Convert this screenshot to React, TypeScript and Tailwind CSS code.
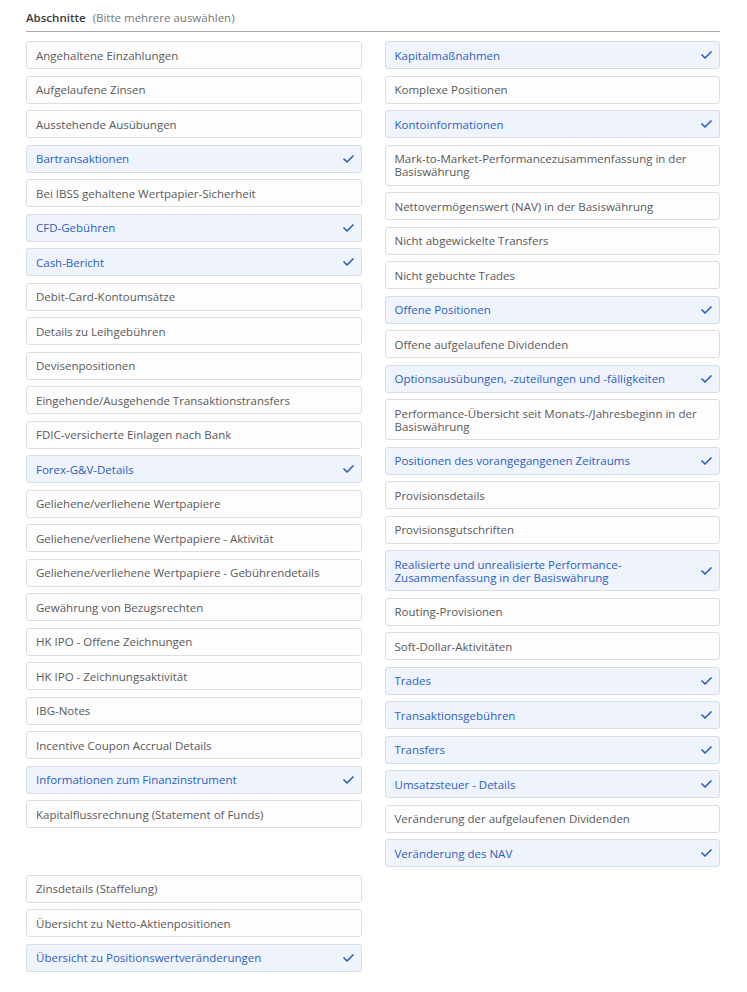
import React from "react";

type Item = { label: string; on?: boolean };

const left: Item[] = [
  { label: "Angehaltene Einzahlungen" },
  { label: "Aufgelaufene Zinsen" },
  { label: "Ausstehende Ausübungen" },
  { label: "Bartransaktionen", on: true },
  { label: "Bei IBSS gehaltene Wertpapier-Sicherheit" },
  { label: "CFD-Gebühren", on: true },
  { label: "Cash-Bericht", on: true },
  { label: "Debit-Card-Kontoumsätze" },
  { label: "Details zu Leihgebühren" },
  { label: "Devisenpositionen" },
  { label: "Eingehende/Ausgehende Transaktionstransfers" },
  { label: "FDIC-versicherte Einlagen nach Bank" },
  { label: "Forex-G&V-Details", on: true },
  { label: "Geliehene/verliehene Wertpapiere" },
  { label: "Geliehene/verliehene Wertpapiere - Aktivität" },
  { label: "Geliehene/verliehene Wertpapiere - Gebührendetails" },
  { label: "Gewährung von Bezugsrechten" },
  { label: "HK IPO - Offene Zeichnungen" },
  { label: "HK IPO - Zeichnungsaktivität" },
  { label: "IBG-Notes" },
  { label: "Incentive Coupon Accrual Details" },
  { label: "Informationen zum Finanzinstrument", on: true },
  { label: "Kapitalflussrechnung (Statement of Funds)" },
];

const right: Item[] = [
  { label: "Kapitalmaßnahmen", on: true },
  { label: "Komplexe Positionen" },
  { label: "Kontoinformationen", on: true },
  { label: "Mark-to-Market-Performancezusammenfassung in der Basiswährung" },
  { label: "Nettovermögenswert (NAV) in der Basiswährung" },
  { label: "Nicht abgewickelte Transfers" },
  { label: "Nicht gebuchte Trades" },
  { label: "Offene Positionen", on: true },
  { label: "Offene aufgelaufene Dividenden" },
  { label: "Optionsausübungen, -zuteilungen und -fälligkeiten", on: true },
  { label: "Performance-Übersicht seit Monats-/Jahresbeginn in der Basiswährung" },
  { label: "Positionen des vorangegangenen Zeitraums", on: true },
  { label: "Provisionsdetails" },
  { label: "Provisionsgutschriften" },
  { label: "Realisierte und unrealisierte Performance-Zusammenfassung in der Basiswährung", on: true },
  { label: "Routing-Provisionen" },
  { label: "Soft-Dollar-Aktivitäten" },
  { label: "Trades", on: true },
  { label: "Transaktionsgebühren", on: true },
  { label: "Transfers", on: true },
  { label: "Umsatzsteuer - Details", on: true },
  { label: "Veränderung der aufgelaufenen Dividenden" },
  { label: "Veränderung des NAV", on: true },
];

const tail: Item[] = [
  { label: "Zinsdetails (Staffelung)" },
  { label: "Übersicht zu Netto-Aktienpositionen" },
  { label: "Übersicht zu Positionswertveränderungen", on: true },
];

function Tick() {
  return (
    <svg width="11" height="8" viewBox="0 0 11 8" className="shrink-0">
      <path d="M1 4l3 3 6-6" fill="none" stroke="#2f63c4" strokeWidth="1.7" strokeLinecap="round" strokeLinejoin="round" />
    </svg>
  );
}

function Option({ label, on }: Item) {
  return (
    <div
      className={
        on
          ? "flex items-center gap-3 rounded-[3px] border border-[#d6dce8] bg-[#eff3fc] pl-[9px] pr-[7px] py-[6.5px] text-[#2c5fc3]"
          : "flex items-center gap-3 rounded-[3px] border border-[#dedede] bg-[#fdfdfd] pl-[9px] pr-[7px] py-[6.5px] text-[#5a5a5a]"
      }
    >
      <span className="flex-1 text-[11.5px] leading-[13px]">{label}</span>
      {on && <Tick />}
    </div>
  );
}

function Column({ items }: { items: Item[] }) {
  return (
    <div className="flex flex-col gap-[6.5px]">
      {items.map((it) => (
        <Option key={it.label} {...it} />
      ))}
    </div>
  );
}

export default function App() {
  return (
    <div className="min-h-screen bg-white pl-[26px] pr-[27px] pt-[9px] pb-4 font-['Open_Sans',sans-serif] w-[747px]">
      <div className="flex items-baseline gap-[7px] border-b border-[#a9a9a9] pb-[5px]">
        <span className="text-[11.5px] font-semibold text-[#3a3a3a]">Abschnitte</span>
        <span className="text-[11.5px] text-[#777]">(Bitte mehrere auswählen)</span>
      </div>
      <div className="mt-[9px] grid grid-cols-2 gap-x-[23px] items-start">
        <Column items={left} />
        <Column items={right} />
      </div>
      <div className="mt-[7.5px] grid grid-cols-2 gap-x-[23px]">
        <Column items={tail} />
      </div>
    </div>
  );
}
